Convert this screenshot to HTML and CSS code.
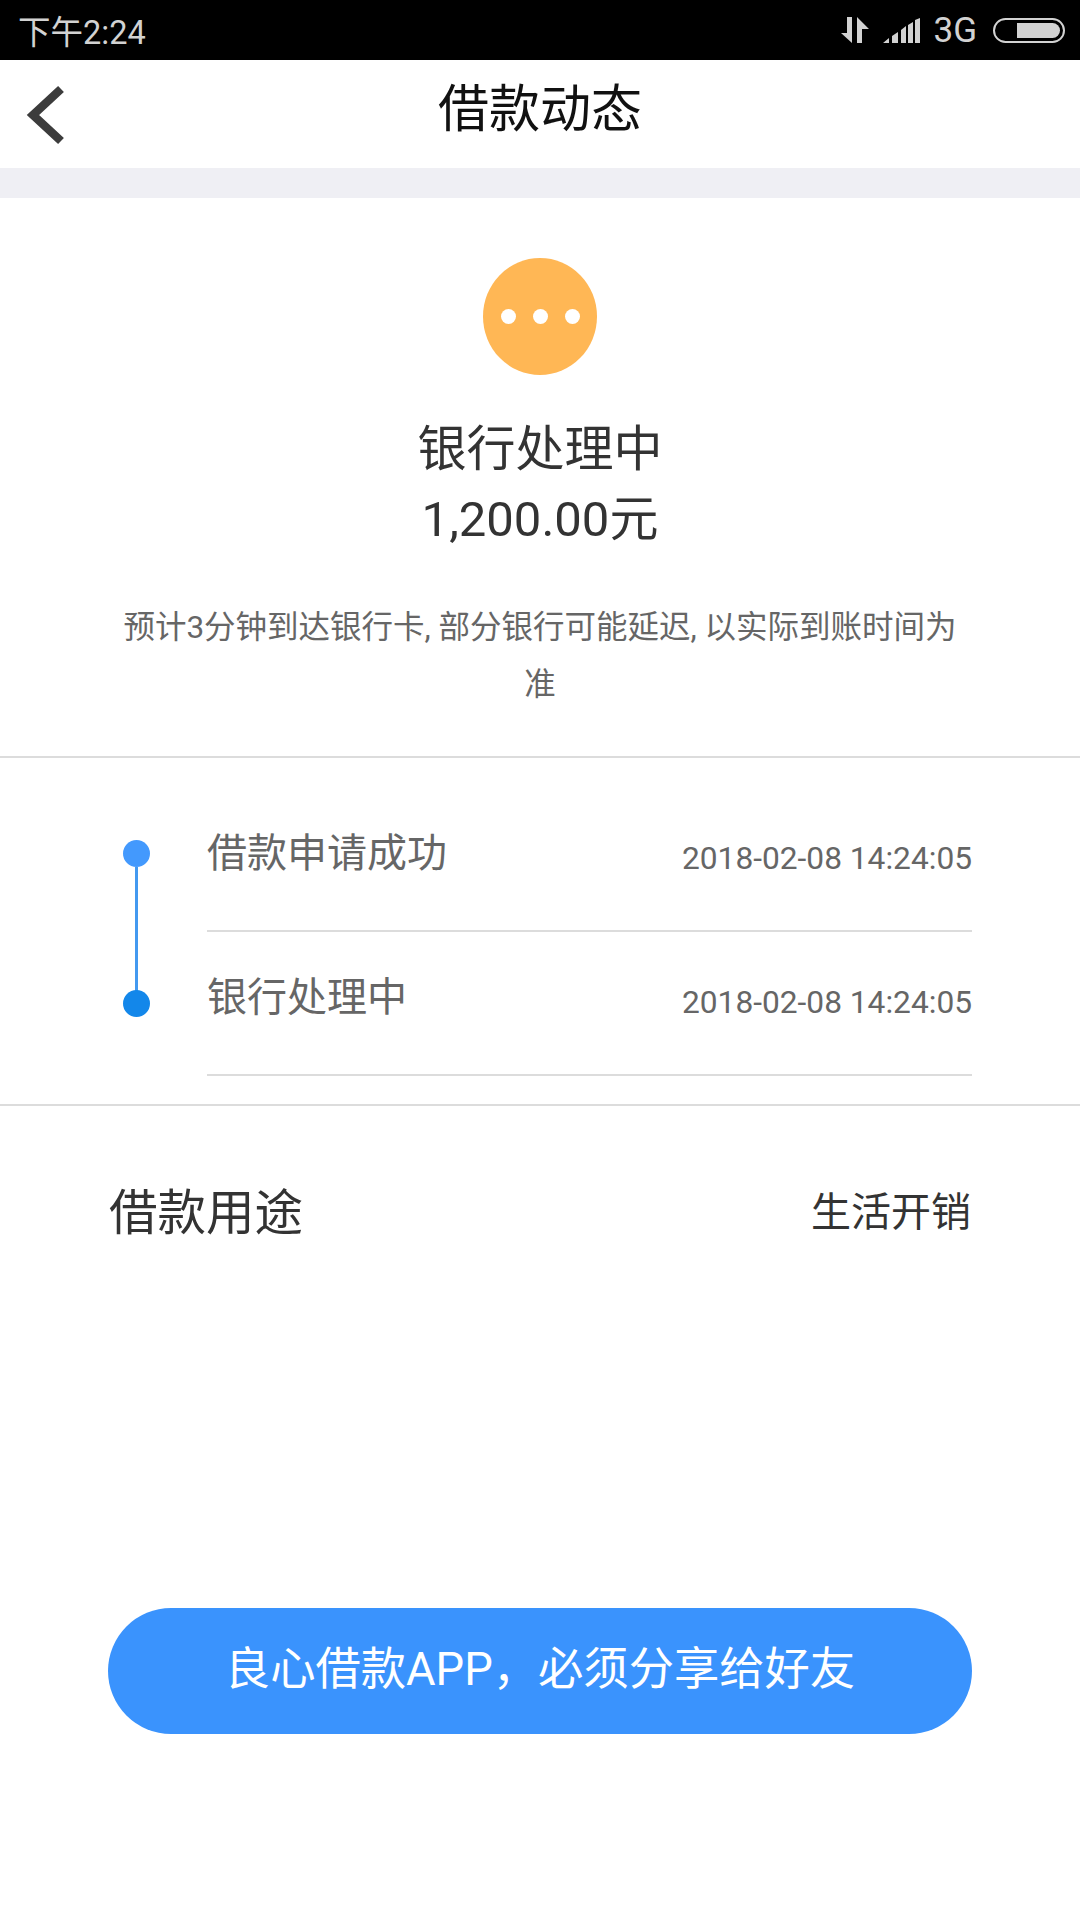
FILE: index.html

```html
<!DOCTYPE html>
<html lang="zh-CN">
<head>
    <meta charset="UTF-8">
    <meta name="viewport" content="width=device-width, initial-scale=1.0">
    <title>借款动态</title>
    <link rel="stylesheet" href="styles.css">
</head>
<body>
    <div class="container">
        <!-- Status bar -->
        <div class="status-bar">
            <div class="status-time">下午2:24</div>
            <div class="status-icons">
                <svg class="icon-data" width="28" height="26" viewBox="0 0 28 26">
                    <path d="M6 0h5v26L0 16h6z" fill="#d2d2d2"/>
                    <path d="M16 0 28 12h-7v14h-5z" fill="#d2d2d2"/>
                </svg>
                <svg class="icon-signal" width="37" height="25" viewBox="0 0 37 25">
                    <path d="M0 25 6 20v5zM9 18l6-4v11H9zM18 12l5-4v17h-5zM25 7l5-3v21h-5zM32 2l5-2v25h-5z" fill="#d2d2d2"/>
                </svg>
                <span class="status-net">3G</span>
                <div class="battery"><div class="battery-level"></div></div>
            </div>
        </div>

        <!-- Title bar -->
        <div class="nav-bar">
            <svg class="back-icon" width="46" height="68" viewBox="0 0 46 68">
                <path d="M39 7 11 33l28 26" fill="none" stroke="#3c3c3c" stroke-width="8.5"/>
            </svg>
            <h1 class="nav-title">借款动态</h1>
        </div>
        <div class="nav-gap"></div>

        <!-- Current state -->
        <div class="state-section">
            <div class="state-icon">
                <span class="state-dot"></span>
                <span class="state-dot"></span>
                <span class="state-dot"></span>
            </div>
            <div class="state-title">银行处理中</div>
            <div class="state-amount">1,200.00元</div>
            <p class="state-note">预计3分钟到达银行卡, 部分银行可能延迟, 以实际到账时间为准</p>
        </div>

        <!-- Progress -->
        <div class="progress-section">
            <div class="progress-row">
                <div class="progress-mark">
                    <span class="mark-dot"></span>
                    <span class="mark-line"></span>
                </div>
                <div class="progress-body">
                    <span class="progress-name">借款申请成功</span>
                    <span class="progress-time">2018-02-08 14:24:05</span>
                </div>
            </div>
            <div class="progress-row">
                <div class="progress-mark">
                    <span class="mark-dot current"></span>
                </div>
                <div class="progress-body">
                    <span class="progress-name">银行处理中</span>
                    <span class="progress-time">2018-02-08 14:24:05</span>
                </div>
            </div>
        </div>

        <!-- Purpose -->
        <div class="purpose-row">
            <span class="purpose-label">借款用途</span>
            <span class="purpose-value">生活开销</span>
        </div>

        <button type="button" class="share-btn">良心借款APP，必须分享给好友</button>
    </div>
</body>
</html>
```

FILE: styles.css

```css
* {
    margin: 0;
    padding: 0;
    box-sizing: border-box;
}

body {
    font-family: Roboto, "Noto Sans CJK SC", sans-serif;
    background: white;
}

.container {
    width: 1080px;
    height: 1920px;
    overflow: hidden;
    background: white;
}

.status-bar {
    height: 60px;
    background: black;
    color: #d2d2d2;
    display: flex;
    align-items: center;
    justify-content: space-between;
    padding: 0 15px 0 18px;
}

.status-time {
    font-size: 32.5px;
    margin-top: -2px;
}

.status-icons {
    display: flex;
    align-items: center;
}

.icon-data {
    margin-right: 14px;
}

.icon-signal {
    margin-right: 13px;
}

.status-net {
    font-size: 35px;
    margin-right: 16px;
}

.battery {
    width: 72px;
    height: 25px;
    border: 2px solid #d2d2d2;
    border-radius: 13px;
    padding: 3px;
    display: flex;
    justify-content: flex-end;
}

.battery-level {
    width: 43px;
    background: #d2d2d2;
    border-radius: 0 8px 8px 0;
}

.nav-bar {
    height: 108px;
    display: flex;
    align-items: center;
    justify-content: center;
    position: relative;
}

.back-icon {
    position: absolute;
    left: 22px;
    top: 22px;
}

.nav-title {
    font-size: 51px;
    font-weight: 400;
    color: #111;
    line-height: 1;
    margin-top: -10px;
}

.nav-gap {
    height: 30px;
    background: #efeff4;
}

.state-section {
    height: 560px;
    border-bottom: 2px solid #dcdcdc;
    display: flex;
    flex-direction: column;
    align-items: center;
    padding-top: 60px;
}

.state-icon {
    width: 114px;
    height: 117px;
    border-radius: 50%;
    background: #ffb755;
    display: flex;
    align-items: center;
    justify-content: center;
    gap: 17px;
}

.state-dot {
    width: 15px;
    height: 15px;
    border-radius: 50%;
    background: white;
}

.state-title {
    font-size: 49px;
    line-height: 70px;
    color: #333;
    margin-top: 40px;
}

.state-amount {
    font-size: 49px;
    line-height: 70px;
    color: #333;
}

.state-note {
    width: 850px;
    margin-top: 44px;
    font-size: 31.5px;
    line-height: 57px;
    color: #666;
    text-align: center;
}

.progress-section {
    height: 348px;
    border-bottom: 2px solid #dcdcdc;
    padding: 30px 108px 0 123px;
}

.progress-row {
    display: flex;
    height: 144px;
}

.progress-mark {
    width: 84px;
    flex-shrink: 0;
    display: flex;
    flex-direction: column;
    align-items: flex-start;
    padding-top: 52px;
}

.mark-dot {
    width: 27px;
    height: 27px;
    border-radius: 50%;
    background: #4399fd;
    flex-shrink: 0;
}

.mark-dot.current {
    background: #1387ea;
    margin-top: 6px;
}

.mark-line {
    width: 3px;
    height: 124px;
    margin-left: 12px;
    background: #4399f0;
    flex-shrink: 0;
}

.progress-body {
    flex: 1;
    height: 144px;
    border-bottom: 2px solid #dcdcdc;
    display: flex;
    justify-content: space-between;
    align-items: flex-start;
    padding-top: 37px;
}

.progress-name {
    font-size: 40px;
    line-height: 58px;
    color: #666;
}

.progress-time {
    font-size: 31.7px;
    line-height: 40px;
    color: #666;
    margin-top: 14px;
}

.purpose-row {
    height: 206px;
    display: flex;
    justify-content: space-between;
    align-items: center;
    padding: 0 109px;
}

.purpose-label {
    font-size: 48.5px;
    color: #333;
}

.purpose-value {
    font-size: 40px;
    color: #333;
}

.share-btn {
    display: block;
    width: 864px;
    height: 126px;
    margin: 296px 0 0 108px;
    padding-bottom: 12px;
    background: #3a93fd;
    color: white;
    border: none;
    border-radius: 63px;
    font-family: inherit;
    font-size: 45.3px;
}
```
